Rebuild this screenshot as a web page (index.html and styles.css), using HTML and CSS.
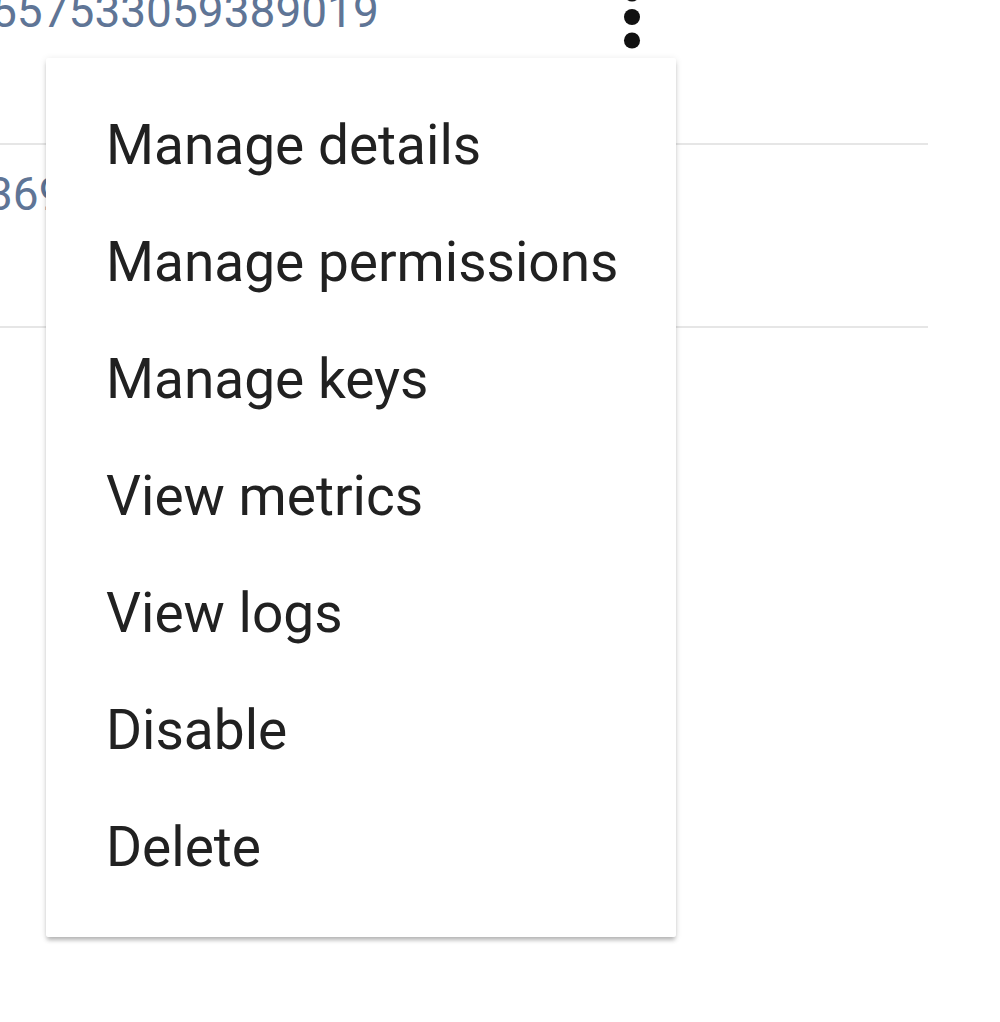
FILE: index.html
```html
<!DOCTYPE html>
<html>
<head>
<meta charset="utf-8">
<link rel="stylesheet" href="styles.css">
</head>
<body>
<div class="page">
  <div class="table">
    <div class="row">
      <div class="id-cell">557533059389019</div>
      <button class="kebab" aria-label="More actions">
        <svg viewBox="0 0 24 24" width="94" height="94"><circle cx="12" cy="6" r="2.05"/><circle cx="12" cy="12" r="2.05"/><circle cx="12" cy="18" r="2.05"/></svg>
      </button>
    </div>
    <div class="row">
      <div class="id-cell id-second">369014825573012</div>
    </div>
  </div>
  <ul class="menu">
    <li class="menu-item">Manage details</li>
    <li class="menu-item">Manage permissions</li>
    <li class="menu-item">Manage keys</li>
    <li class="menu-item">View metrics</li>
    <li class="menu-item">View logs</li>
    <li class="menu-item">Disable</li>
    <li class="menu-item">Delete</li>
  </ul>
</div>
</body>
</html>
```
FILE: styles.css
```css
html, body {
  margin: 0;
  padding: 0;
  background: #ffffff;
  overflow: hidden;
}
body {
  width: 1000px;
  height: 1022px;
  font-family: Roboto, "Liberation Sans", Arial, sans-serif;
}
.page {
  position: relative;
  width: 1000px;
  height: 1022px;
  overflow: hidden;
}
.table {
  margin: -38px 0 0 -9px;
  width: 937px;
}
.row {
  box-sizing: border-box;
  height: 183px;
  padding-top: 26px;
  border-bottom: 2px solid #e6e6e6;
  display: flex;
  align-items: flex-start;
}
.id-cell {
  flex: none;
  width: 594px;
  font-size: 46px;
  line-height: 46px;
  color: #5f7596;
  white-space: nowrap;
}
.id-second {
  margin-left: -4px;
}
.kebab {
  flex: none;
  margin: -18.5px 0 0 0;
  padding: 0;
  border: 0;
  background: transparent;
  width: 94px;
  height: 94px;
  display: flex;
}
.kebab svg {
  fill: #111111;
  display: block;
}
.menu {
  position: absolute;
  left: 46px;
  top: 58px;
  width: 630px;
  box-sizing: border-box;
  margin: 0;
  padding: 29px 0 31px;
  list-style: none;
  background: #ffffff;
  border-radius: 2px;
  box-shadow: 0 4px 4px -1px rgba(0,0,0,0.25), 0 1px 7px rgba(0,0,0,0.10);
}
.menu-item {
  height: 117px;
  line-height: 117px;
  padding-left: 60px;
  font-size: 55px;
  color: #212121;
  white-space: nowrap;
}
```
